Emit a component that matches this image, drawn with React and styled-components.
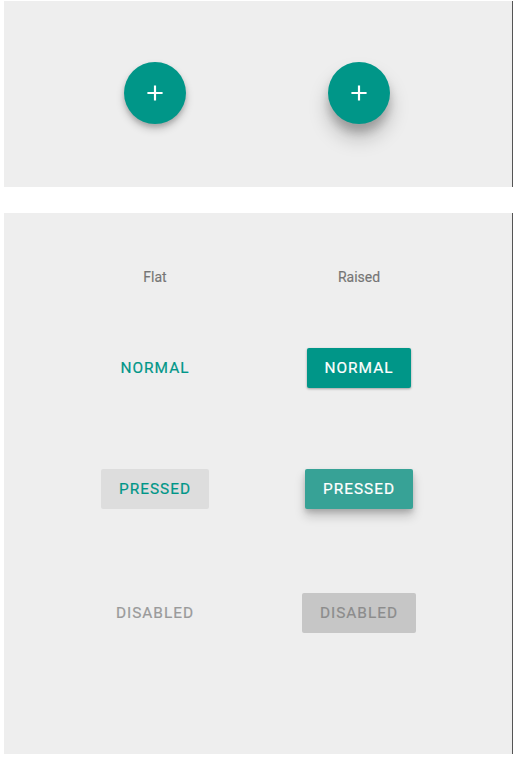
import React from 'react';
import styled, { createGlobalStyle, css } from 'styled-components';

const GlobalStyle = createGlobalStyle`
  body {
    margin: 0;
    background: #ffffff;
    font-family: Roboto, "Liberation Sans", sans-serif;
  }
`;

const Page = styled.div`
  display: flex;
  flex-direction: column;
  gap: 26px;
  padding: 1px 0 0 4px;
  width: 509px;
`;

const Panel = styled.section`
  background: #eeeeee;
  border-right: 1px solid #555555;
  height: ${(p) => p.$height}px;
  box-sizing: border-box;
`;

const FabRow = styled.div`
  display: grid;
  grid-template-columns: 204px 204px;
  justify-content: center;
  justify-items: center;
  padding: 61px 2px 0 0;
`;

const Fab = styled.button`
  width: 62px;
  height: 62px;
  border-radius: 50%;
  border: none;
  padding: 0;
  background: #009688;
  color: #ffffff;
  display: flex;
  align-items: center;
  justify-content: center;
  box-shadow: ${(p) =>
    p.$pressed
      ? '0 14px 20px rgba(0,0,0,0.22), 0 8px 9px rgba(0,0,0,0.18)'
      : '0 5px 8px rgba(0,0,0,0.2), 0 3px 4px rgba(0,0,0,0.14)'};
`;

const Grid = styled.div`
  display: grid;
  grid-template-columns: 204px 204px;
  justify-content: center;
  justify-items: center;
  padding: 56px 2px 0 0;
`;

const Label = styled.div`
  font-size: 14px;
  font-weight: 400;
  color: #757575;
  line-height: 16px;
  -webkit-text-stroke: 0.15px #757575;
`;

const Cell = styled.div`
  height: 40px;
  display: flex;
  align-items: center;
  justify-content: center;
  margin-top: ${(p) => p.$top}px;
`;

const Button = styled.button`
  height: 40px;
  min-width: 97px;
  padding: 0 18px;
  border: none;
  border-radius: 2px;
  font-family: Roboto, "Liberation Sans", sans-serif;
  font-size: 15.4px;
  font-weight: 400;
  letter-spacing: 1px;
  text-transform: uppercase;
  -webkit-text-stroke: 0.2px currentColor;
  background: transparent;
  color: #009688;

  ${(p) => p.$kind === 'flat-pressed' && css`
    background: #dddddd;
  `}
  ${(p) => p.$kind === 'flat-disabled' && css`
    color: #9a9a9a;
  `}
  ${(p) => p.$kind === 'raised' && css`
    background: #009688;
    color: #ffffff;
    box-shadow: 0 1px 3px rgba(0,0,0,0.2), 0 1px 2px rgba(0,0,0,0.14);
  `}
  ${(p) => p.$kind === 'raised-pressed' && css`
    background: #37a296;
    color: #ffffff;
    box-shadow: 0 7px 11px rgba(0,0,0,0.2), 0 3px 5px rgba(0,0,0,0.14);
  `}
  ${(p) => p.$kind === 'raised-disabled' && css`
    background: #c6c6c6;
    color: #8c8c8c;
  `}
`;

function PlusIcon() {
  return (
    <svg width="26" height="26" viewBox="0 0 24 24" fill="currentColor">
      <path d="M19 13h-6v6h-2v-6H5v-2h6V5h2v6h6v2z" />
    </svg>
  );
}

const rows = [
  { top: 63, flat: 'flat', raised: 'raised', text: 'Normal' },
  { top: 81, flat: 'flat-pressed', raised: 'raised-pressed', text: 'Pressed' },
  { top: 84, flat: 'flat-disabled', raised: 'raised-disabled', text: 'Disabled' },
];

export default function App() {
  return (
    <>
      <GlobalStyle />
      <Page>
        <Panel $height={186}>
          <FabRow>
            <Fab><PlusIcon /></Fab>
            <Fab $pressed><PlusIcon /></Fab>
          </FabRow>
        </Panel>
        <Panel $height={541}>
          <Grid>
            <Label>Flat</Label>
            <Label>Raised</Label>
            {rows.map((r) => (
              <React.Fragment key={r.text}>
                <Cell $top={r.top}>
                  <Button $kind={r.flat}>{r.text}</Button>
                </Cell>
                <Cell $top={r.top}>
                  <Button $kind={r.raised}>{r.text}</Button>
                </Cell>
              </React.Fragment>
            ))}
          </Grid>
        </Panel>
      </Page>
    </>
  );
}
